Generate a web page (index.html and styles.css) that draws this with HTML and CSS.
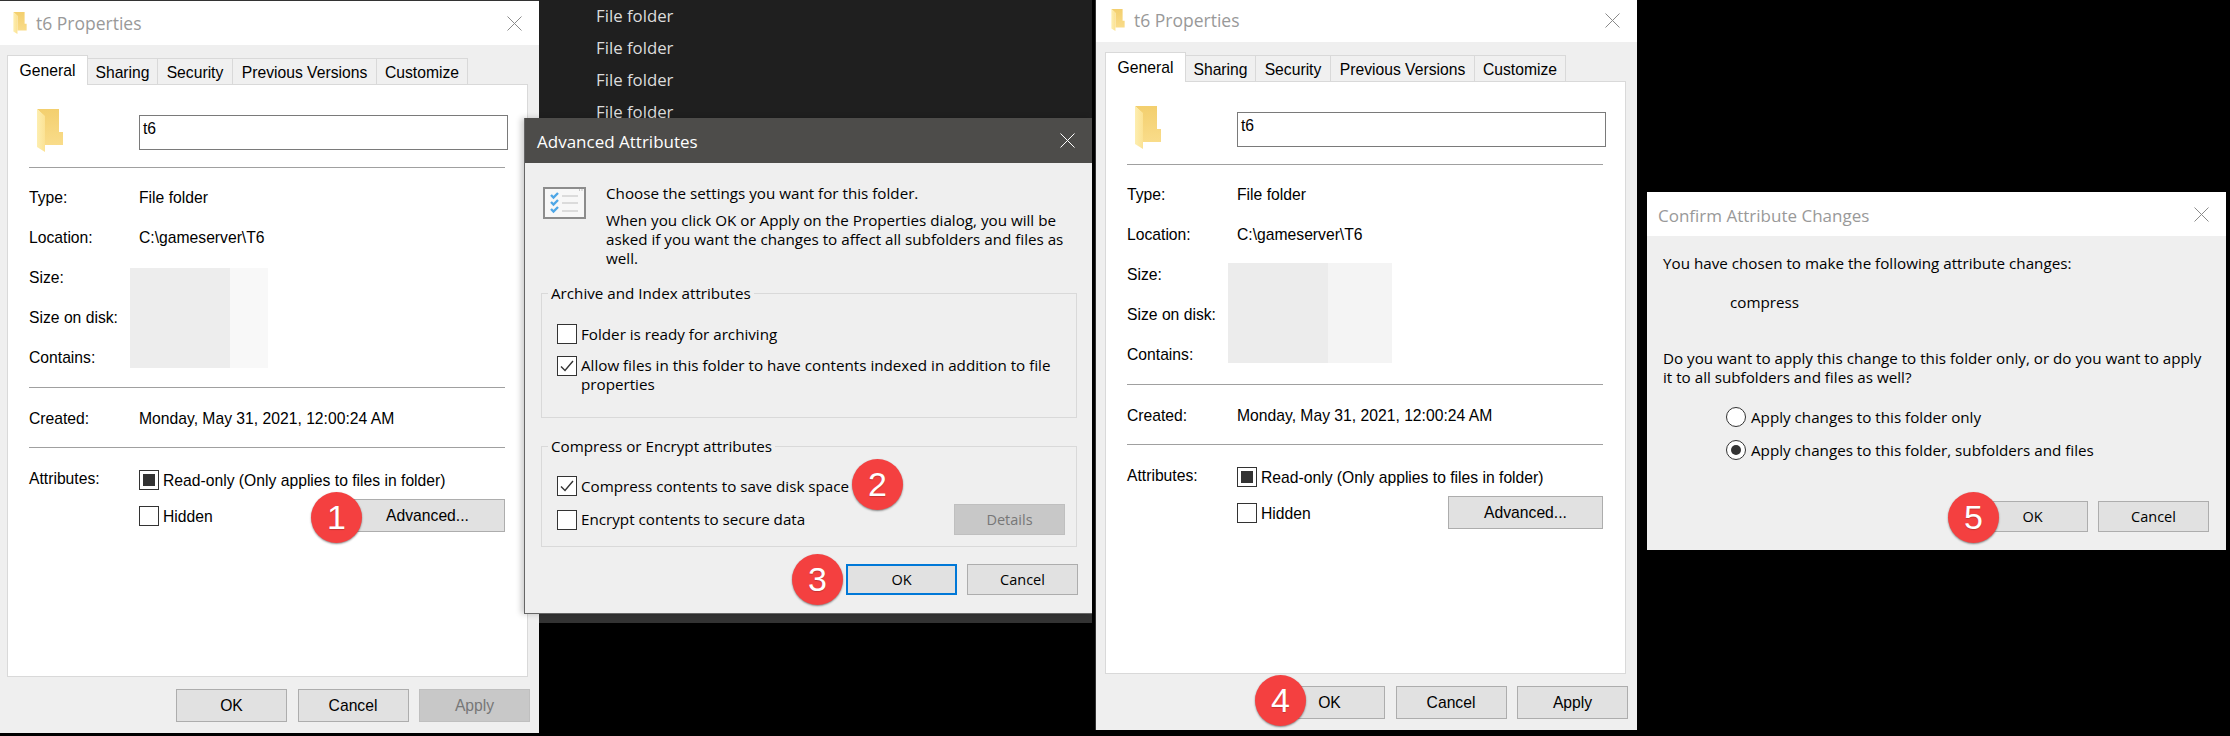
FILE: index.html
```html
<!DOCTYPE html>
<html lang="en">
<head>
<meta charset="utf-8">
<title>Folder compression steps</title>
<link rel="stylesheet" href="styles.css">
</head>
<body>
<svg class="defs" width="0" height="0" aria-hidden="true">
  <defs>
    <linearGradient id="fb" x1="0" y1="0" x2="0" y2="1"><stop offset="0" stop-color="#f3cf6e"/><stop offset="1" stop-color="#f9dc8a"/></linearGradient>
    <linearGradient id="ff" x1="0" y1="0" x2="1" y2="0"><stop offset="0" stop-color="#fdeeb0"/><stop offset="1" stop-color="#fbe294"/></linearGradient>
    <symbol id="folder" viewBox="0 0 26 43">
      <path d="M0 0H22V23H26V36H8V8Z" fill="url(#fb)"/>
      <path d="M0 0L8 7V43L0 38Z" fill="url(#ff)"/>
    </symbol>
    <symbol id="close" viewBox="0 0 15 15">
      <path d="M0.5 0.5L14.5 14.5M14.5 0.5L0.5 14.5" fill="none" stroke="currentColor" stroke-width="1"/>
    </symbol>
    <symbol id="tick" viewBox="0 0 18 18">
      <path d="M3 9.5L7 13.5L15 4" fill="none" stroke="#333" stroke-width="1.4"/>
    </symbol>
  </defs>
</svg>

<main class="stage">
  <section class="explorer">
    <ul class="explorer-list">
      <li>File folder</li>
      <li>File folder</li>
      <li>File folder</li>
      <li>File folder</li>
    </ul>
    <div class="explorer-band"></div>
  </section>

  <section class="window window-a">
    <header class="titlebar">
      <svg class="title-icon"><use href="#folder"/></svg>
      <span class="title-text">t6 Properties</span>
      <svg class="close-x"><use href="#close"/></svg>
    </header>
    <div class="window-body">
      <nav class="tabs">
        <span class="tab tab-active tab-general">General</span>
        <span class="tab tab-sharing">Sharing</span>
        <span class="tab tab-security">Security</span>
        <span class="tab tab-previous">Previous Versions</span>
        <span class="tab tab-customize">Customize</span>
      </nav>
      <div class="panel">
        <div class="masked masked-a"><span class="mask-dark"></span><span class="mask-light"></span></div>
        <div class="head-row">
          <div class="head-icon"><svg class="big-folder"><use href="#folder"/></svg></div>
          <div class="textbox">t6</div>
        </div>
        <hr class="sep sep-first">
        <div class="info-rows">
          <div class="info-row"><span class="info-label">Type:</span><span>File folder</span></div>
          <div class="info-row"><span class="info-label">Location:</span><span>C:\gameserver\T6</span></div>
          <div class="info-row"><span class="info-label">Size:</span></div>
          <div class="info-row"><span class="info-label">Size on disk:</span></div>
          <div class="info-row"><span class="info-label">Contains:</span></div>
        </div>
        <hr class="sep">
        <div class="info-rows">
          <div class="info-row info-row-created"><span class="info-label">Created:</span><span>Monday, May 31, 2021, 12:00:24 AM</span></div>
        </div>
        <hr class="sep">
        <div class="attrs">
          <span class="attrs-label">Attributes:</span>
          <div class="attrs-main">
            <label class="check-row"><span class="check check-mixed"></span><span class="check-text">Read-only (Only applies to files in folder)</span></label>
            <div class="attrs-second">
              <label class="check-row"><span class="check"></span><span class="check-text">Hidden</span></label>
              <button class="btn btn-advanced">Advanced...</button>
            </div>
          </div>
        </div>
      </div>
      <div class="button-row">
        <button class="btn">OK</button>
        <button class="btn">Cancel</button>
        <button class="btn btn-disabled">Apply</button>
      </div>
    </div>
  </section>

  <section class="dialog dialog-advanced">
    <header class="dark-title">
      <span>Advanced Attributes</span>
      <svg class="close-x close-light"><use href="#close"/></svg>
    </header>
    <div class="dialog-body">
      <div class="intro">
        <svg class="list-icon" viewBox="0 0 43 32">
          <rect x="1" y="1" width="41" height="30" fill="#f7f7f7" stroke="#8c8c8c" stroke-width="2"/>
          <path d="M36 3h1M38.500 3h1" stroke="#c4c4c4" stroke-width="2"/>
          <path d="M8 8l2.500 2.500L15 6M8 15l2.500 2.500L15 13M8 22l2.500 2.500L15 20" fill="none" stroke="#4ea6e6" stroke-width="2.400"/>
          <path d="M19 9h16M19 16h16M19 24h16" stroke="#d2d2d2" stroke-width="1.500"/>
        </svg>
        <div class="intro-text">
          <p>Choose the settings you want for this folder.</p>
          <p class="intro-second">When you click OK or Apply on the Properties dialog, you will be<br>asked if you want the changes to affect all subfolders and files as<br>well.</p>
        </div>
      </div>
      <fieldset class="group group-archive">
        <legend>Archive and Index attributes</legend>
        <label class="check-row"><span class="check"></span>Folder is ready for archiving</label>
        <label class="check-row check-row-top"><span class="check"><svg class="tick"><use href="#tick"/></svg></span><span>Allow files in this folder to have contents indexed in addition to file<br>properties</span></label>
      </fieldset>
      <fieldset class="group group-compress">
        <legend>Compress or Encrypt attributes</legend>
        <label class="check-row"><span class="check"><svg class="tick"><use href="#tick"/></svg></span>Compress contents to save disk space</label>
        <div class="encrypt-row">
          <label class="check-row"><span class="check"></span>Encrypt contents to secure data</label>
          <button class="btn btn-disabled btn-details">Details</button>
        </div>
      </fieldset>
      <div class="dialog-buttons">
        <button class="btn btn-short btn-focus">OK</button>
        <button class="btn btn-short">Cancel</button>
      </div>
    </div>
  </section>

  <section class="window window-b">
    <header class="titlebar">
      <svg class="title-icon"><use href="#folder"/></svg>
      <span class="title-text">t6 Properties</span>
      <svg class="close-x"><use href="#close"/></svg>
    </header>
    <div class="window-body">
      <nav class="tabs">
        <span class="tab tab-active tab-general">General</span>
        <span class="tab tab-sharing">Sharing</span>
        <span class="tab tab-security">Security</span>
        <span class="tab tab-previous">Previous Versions</span>
        <span class="tab tab-customize">Customize</span>
      </nav>
      <div class="panel">
        <div class="masked masked-b"><span class="mask-dark"></span><span class="mask-light"></span></div>
        <div class="head-row">
          <div class="head-icon"><svg class="big-folder"><use href="#folder"/></svg></div>
          <div class="textbox">t6</div>
        </div>
        <hr class="sep sep-first">
        <div class="info-rows">
          <div class="info-row"><span class="info-label">Type:</span><span>File folder</span></div>
          <div class="info-row"><span class="info-label">Location:</span><span>C:\gameserver\T6</span></div>
          <div class="info-row"><span class="info-label">Size:</span></div>
          <div class="info-row"><span class="info-label">Size on disk:</span></div>
          <div class="info-row"><span class="info-label">Contains:</span></div>
        </div>
        <hr class="sep">
        <div class="info-rows">
          <div class="info-row info-row-created"><span class="info-label">Created:</span><span>Monday, May 31, 2021, 12:00:24 AM</span></div>
        </div>
        <hr class="sep">
        <div class="attrs">
          <span class="attrs-label">Attributes:</span>
          <div class="attrs-main">
            <label class="check-row"><span class="check check-mixed"></span><span class="check-text">Read-only (Only applies to files in folder)</span></label>
            <div class="attrs-second">
              <label class="check-row"><span class="check"></span><span class="check-text">Hidden</span></label>
              <button class="btn btn-advanced">Advanced...</button>
            </div>
          </div>
        </div>
      </div>
      <div class="button-row">
        <button class="btn">OK</button>
        <button class="btn">Cancel</button>
        <button class="btn">Apply</button>
      </div>
    </div>
  </section>

  <section class="dialog dialog-confirm">
    <header class="light-title">
      <span>Confirm Attribute Changes</span>
      <svg class="close-x"><use href="#close"/></svg>
    </header>
    <div class="confirm-body">
      <p>You have chosen to make the following attribute changes:</p>
      <p class="confirm-change">compress</p>
      <p class="confirm-question">Do you want to apply this change to this folder only, or do you want to apply<br>it to all subfolders and files as well?</p>
      <label class="radio-row radio-first"><span class="radio"></span>Apply changes to this folder only</label>
      <label class="radio-row"><span class="radio radio-on"></span>Apply changes to this folder, subfolders and files</label>
      <div class="confirm-buttons">
        <button class="btn btn-short">OK</button>
        <button class="btn btn-short">Cancel</button>
      </div>
    </div>
  </section>

  <span class="badge badge-1">1</span>
  <span class="badge badge-2">2</span>
  <span class="badge badge-3">3</span>
  <span class="badge badge-4">4</span>
  <span class="badge badge-5">5</span>
</main>
</body>
</html>
```
FILE: styles.css
```css
* { box-sizing: border-box; }
html, body { margin: 0; padding: 0; background: #000; }
.defs { position: absolute; }

.stage {
  position: relative;
  width: 2230px;
  height: 736px;
  overflow: hidden;
  background: #000;
  font-family: "Liberation Sans", Arial, sans-serif;
  font-size: 15.700px;
  color: #000;
}

/* Explorer behind the dialogs */
.explorer {
  position: absolute;
  left: 539px;
  top: 0;
  width: 553px;
  height: 623px;
  display: flex;
  flex-direction: column;
}
.explorer-list {
  flex: 1;
  margin: 0;
  padding: 0 0 0 57px;
  list-style: none;
  background: #1f1f1f;
  color: #dcdcdc;
  font-family: "Open Sans", sans-serif;
  font-size: 16.800px;
  line-height: 32px;
  overflow: hidden;
}
.explorer-band { height: 9px; background: #333; }

/* Properties window */
.window {
  position: absolute;
  width: 541px;
  height: 733px;
  display: flex;
  flex-direction: column;
  border-top: 1px solid #333;
  background: #efefef;
}
.window-a { left: -2px; top: 0; }
.window-b { left: 1096px; top: -3px; box-shadow: -1px 0 0 #333; }

.titlebar {
  height: 44px;
  flex: none;
  display: flex;
  align-items: center;
  padding: 0 17px 0 15px;
  background: #fff;
}
.title-icon { width: 14px; height: 22px; flex: none; }
.title-text {
  flex: 1;
  margin-left: 9px;
  color: #999;
  font-family: "Open Sans", sans-serif;
  font-size: 17.500px;
}
.close-x { width: 15px; height: 15px; flex: none; color: #8a8a8a; }
.close-light { color: #fff; }

.window-body {
  flex: 1;
  padding: 10px 9px 0;
  display: flex;
  flex-direction: column;
}

.tabs {
  display: flex;
  align-items: flex-start;
  height: 30px;
  margin-bottom: -1px;
  position: relative;
  z-index: 1;
}
.tab {
  height: 26px;
  margin-top: 3px;
  border: 1px solid #d9d9d9;
  border-bottom: 0;
  border-left: 0;
  background: #f0f0f0;
  line-height: 28px;
  text-align: center;
  overflow: hidden;
}
.tab-active {
  height: 30px;
  margin-top: 0;
  border-left: 1px solid #d9d9d9;
  background: #fff;
  line-height: 30px;
}
.tab-general { width: 81px; }
.tab-sharing { width: 70px; }
.tab-security { width: 75px; }
.tab-previous { width: 144px; }
.tab-customize { width: 91px; }

.panel {
  position: relative;
  width: 521px;
  height: 593px;
  flex: none;
  padding: 30px 22px 0 21px;
  border: 1px solid #d9d9d9;
  background: #fff;
}

.masked { position: absolute; display: flex; height: 100px; }
.masked-a { left: 122px; top: 183px; }
.masked-b { left: 122px; top: 181px; }
.mask-dark { width: 100px; background: #ededed; }
.mask-light { background: #f8f8f8; }
.masked-a .mask-light { width: 38px; }
.masked-b .mask-dark { background: #ececec; }
.masked-b .mask-light { width: 64px; background: #f4f4f4; }

.head-row { display: flex; align-items: center; height: 35px; }
.head-icon { width: 110px; padding-left: 8px; display: flex; align-items: center; flex: none; }
.big-folder { width: 26px; height: 43px; margin-top: -4px; }
.textbox {
  width: 369px;
  height: 35px;
  flex: none;
  padding: 3px;
  border: 1px solid #7a7a7a;
  line-height: 20px;
}

.sep { height: 1px; margin: 10px 0 0; border: 0; background: #a0a0a0; }
.sep-first { margin-top: 17px; }

.info-rows { margin-top: 9px; }
.info-row { display: flex; height: 40px; padding-top: 2px; align-items: center; }
.info-row-created { padding-top: 4px; }
.info-label { width: 110px; flex: none; }

.attrs { display: flex; margin-top: 21px; }
.attrs-label { width: 110px; flex: none; padding-top: 2px; line-height: 16px; }
.attrs-main { flex: 1; display: flex; flex-direction: column; gap: 9px; }
.attrs-second { display: flex; align-items: center; justify-content: space-between; height: 33px; }

.check-row { display: flex; align-items: center; gap: 4px; line-height: 19px; }
.check-text { padding-top: 2px; }
.check-row-top { align-items: flex-start; margin-top: 12px; }
.check {
  width: 20px;
  height: 20px;
  flex: none;
  display: flex;
  align-items: center;
  justify-content: center;
  border: 1px solid #333;
  background: #fff;
}
.check-mixed::before { content: ""; width: 12px; height: 12px; background: #333; }
.tick { width: 18px; height: 18px; }

.button-row { display: flex; justify-content: flex-end; gap: 10.500px; margin-top: 12px; }

.btn {
  width: 111px;
  height: 33px;
  padding: 0;
  border: 1px solid #adadad;
  background: #e1e1e1;
  color: #000;
  font: inherit;
}
.btn-advanced { width: 155px; }
.btn-disabled { border-color: #bfbfbf; background: #c8c8c8; color: #777; }
.btn-short { height: 31px; }
.btn-focus { border: 2px solid #0078d7; }

/* Dialogs */
.dialog { position: absolute; background: #efefef; font-family: "Open Sans", sans-serif; font-size: 15.200px; line-height: 19px; }
.dialog .btn { font-size: 14.500px; }
.dialog-advanced {
  left: 524px;
  top: 118px;
  width: 568px;
  height: 496px;
  border-left: 1px solid #666;
  border-bottom: 1px solid #666;
  box-shadow: -3px 0 6px rgba(0, 0, 0, 0.2);
}
.dark-title {
  height: 45px;
  display: flex;
  align-items: center;
  justify-content: space-between;
  padding: 2px 17px 0 12px;
  background: #4d4c4a;
  color: #fff;
  font-size: 17px;
}
.dark-title .close-x { margin-top: -2px; }
.dialog-body { padding: 21px 14px 0 16px; }
.intro { display: flex; }
.list-icon { width: 43px; height: 32px; margin: 3px 20px 0 2px; flex: none; }
.intro-text p { margin: 0; }
.intro-text .intro-second { margin-top: 8px; }

.group {
  margin: 16px 0 0;
  padding: 0 11px 23px 15px;
  width: 536px;
  border: 1px solid #d9d9d9;
  min-width: 0;
}
.group legend { margin-left: -9px; padding: 0 3px; line-height: 19px; }
.group-archive { padding-top: 21px; }
.group-compress { margin-top: 19px; padding-top: 20px; padding-bottom: 11px; }
.encrypt-row { display: flex; align-items: center; justify-content: space-between; margin-top: 8px; }
.btn-details { height: 31px; }
.dialog-buttons { display: flex; justify-content: flex-end; gap: 10px; margin-top: 17px; }

.dialog-confirm { left: 1647px; top: 192px; width: 579px; height: 358px; }
.light-title {
  height: 44px;
  display: flex;
  align-items: center;
  justify-content: space-between;
  padding: 2px 17px 0 11px;
  background: #fff;
  color: #999;
  font-size: 17px;
}
.light-title .close-x { margin-top: -2px; }
.confirm-body { padding: 18px 17px 0 16px; }
.confirm-body p { margin: 0; }
.confirm-body .confirm-change { margin: 20px 0 0 67px; }
.confirm-body .confirm-question { margin-top: 37px; }
.radio-row { display: flex; align-items: center; gap: 5px; height: 20px; margin: 13px 0 0 63px; }
.radio-first { margin-top: 20px; }
.radio {
  width: 20px;
  height: 20px;
  flex: none;
  display: flex;
  align-items: center;
  justify-content: center;
  border: 1px solid #333;
  border-radius: 50%;
  background: #fff;
}
.radio-on::before { content: ""; width: 10px; height: 10px; border-radius: 50%; background: #333; }
.confirm-buttons { display: flex; justify-content: flex-end; gap: 10px; margin-top: 41px; }

/* Step badges */
.badge {
  position: absolute;
  width: 51px;
  height: 51px;
  display: flex;
  align-items: center;
  justify-content: center;
  border-radius: 50%;
  background: #f44040;
  color: #fff;
  font-family: "Liberation Sans", Arial, sans-serif;
  font-size: 34px;
  box-shadow: 0 1px 2px rgba(0, 0, 0, 0.45);
  text-shadow: 0 1px 1px rgba(0, 0, 0, 0.2);
}
.badge-1 { left: 311px; top: 492px; }
.badge-2 { left: 852px; top: 459px; }
.badge-3 { left: 792px; top: 554px; }
.badge-4 { left: 1255px; top: 675px; }
.badge-5 { left: 1948px; top: 492px; }
```
